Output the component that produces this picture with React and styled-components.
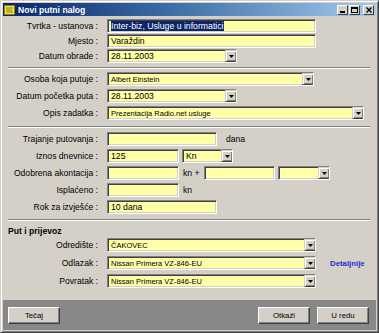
import React from 'react';
import styled, { createGlobalStyle } from 'styled-components';

const GlobalStyle = createGlobalStyle`
  html, body {
    margin: 0;
    padding: 0;
    background: #d4d0c8;
  }
  * { box-sizing: border-box; }
`;

const Window = styled.div`
  width: 379px;
  height: 333px;
  display: flex;
  flex-direction: column;
  background: #d4d0c8;
  border: 1px solid;
  border-color: #d4d0c8 #404040 #404040 #d4d0c8;
  box-shadow: inset 1px 1px #ffffff, inset -1px -1px #808080;
  padding: 2px;
  font-family: 'Liberation Sans', Arial, sans-serif;
  color: #000;
`;

const TitleBar = styled.div`
  height: 13px;
  flex-shrink: 0;
  display: flex;
  align-items: center;
  padding: 0 2px 0 1px;
  background: linear-gradient(to right, #0a246a 0%, #3a6ea5 45%, #a6caf0 100%);
`;

const TitleText = styled.span`
  color: #fff;
  font-weight: bold;
  font-size: 8.6px;
  margin-left: 3px;
  flex: 1;
`;

const CaptionGroup = styled.div`
  display: flex;
  gap: 1px;
`;

const CaptionButton = styled.div`
  width: 11px;
  height: 10px;
  margin-left: ${p => (p.$gap ? '2px' : '0')};
  background: #d4d0c8;
  border: 1px solid;
  border-color: #ffffff #404040 #404040 #ffffff;
  display: flex;
  align-items: center;
  justify-content: center;
`;

const Content = styled.div`
  flex: 1;
  padding: 3px 0 0 1px;
  display: flex;
  flex-direction: column;
`;

const Rows = styled.div`
  display: flex;
  flex-direction: column;
  gap: ${p => p.$gap}px;
`;

const Row = styled.div`
  display: flex;
  align-items: center;
  height: 14px;
`;

const Label = styled.div`
  width: 94px;
  flex-shrink: 0;
  text-align: right;
  font-size: 8.6px;
  white-space: nowrap;
  margin-right: 9px;
`;

const Field = styled.div`
  width: ${p => p.$w}px;
  height: 14px;
  flex-shrink: 0;
  display: flex;
  align-items: center;
  background: #ffffa8;
  border: 1px solid;
  border-color: #808080 #ffffff #ffffff #808080;
  box-shadow: inset 1px 1px #404040, inset -1px -1px #d4d0c8;
  padding: 0 2px 0 3px;
  font-size: ${p => (p.$small ? '7.5px' : '8.7px')};
  white-space: nowrap;
  overflow: hidden;
  margin-left: ${p => p.$ml || 0}px;
`;

const ComboText = styled.span`
  flex: 1;
  overflow: hidden;
`;

const Selected = styled.span`
  background: #0a246a;
  color: #fff;
`;

const DropButton = styled.div`
  width: 12px;
  height: 12px;
  margin-right: -1px;
  flex-shrink: 0;
  background: #d4d0c8;
  border: 1px solid;
  border-color: #d4d0c8 #404040 #404040 #d4d0c8;
  box-shadow: inset 1px 1px #fff, inset -1px -1px #808080;
  display: flex;
  align-items: center;
  justify-content: center;
`;

const Unit = styled.span`
  font-size: 8.6px;
  margin-left: ${p => p.$ml}px;
  white-space: nowrap;
`;

const Separator = styled.div`
  margin: ${p => p.$mt}px 6px ${p => p.$mb}px 4px;
  height: 2px;
  border-top: 1px solid #808080;
  border-bottom: 1px solid #ffffff;
`;

const SectionTitle = styled.div`
  font-size: 8.6px;
  font-weight: bold;
  height: 12px;
  line-height: 12px;
  margin: 4px 0 1px 4px;
`;

const LinkText = styled.span`
  color: #2a2ad0;
  font-weight: bold;
  font-size: 7.8px;
  margin-left: 14px;
`;

const Footer = styled.div`
  height: 30px;
  flex-shrink: 0;
  background: #888888;
  display: flex;
  align-items: center;
  padding: 0 7px 0 5px;
  gap: 7px;
`;

const Spacer = styled.div`
  flex: 1;
`;

const PushButton = styled.div`
  width: 52px;
  height: 17px;
  background: #d4d0c8;
  border: 1px solid;
  border-color: #ffffff #404040 #404040 #ffffff;
  box-shadow: inset -1px -1px #808080;
  display: flex;
  align-items: center;
  justify-content: center;
  font-size: 7.8px;
`;

const Arrow = () => (
  <svg width="5" height="3" viewBox="0 0 5 3">
    <path d="M0 0h5L2.5 3z" fill="#000" />
  </svg>
);

const Combo = ({ w, small, children, ml }) => (
  <Field $w={w} $small={small} $ml={ml} style={{ paddingRight: 0 }}>
    <ComboText>{children}</ComboText>
    <DropButton>
      <Arrow />
    </DropButton>
  </Field>
);

const AppIcon = () => (
  <svg width="11" height="10" viewBox="0 0 11 10">
    <rect x="0.5" y="0.5" width="10" height="9" fill="#f8e840" stroke="#8a7a10" />
    <path d="M2 3h7M2 5h6M2 7h7" stroke="#6b5e10" strokeWidth="0.8" />
  </svg>
);

export default function App() {
  return (
    <>
      <GlobalStyle />
      <Window>
        <TitleBar>
          <AppIcon />
          <TitleText>Novi putni nalog</TitleText>
          <CaptionGroup>
            <CaptionButton>
              <svg width="5" height="6" viewBox="0 0 5 6"><rect x="0" y="4" width="5" height="2" fill="#000" /></svg>
            </CaptionButton>
            <CaptionButton>
              <svg width="7" height="6" viewBox="0 0 7 6"><rect x="0.5" y="0.5" width="6" height="5" fill="none" stroke="#000" /><rect x="0" y="0" width="7" height="2" fill="#000" /></svg>
            </CaptionButton>
            <CaptionButton $gap>
              <svg width="6" height="6" viewBox="0 0 6 6"><path d="M0.5 0.5l5 5M5.5 0.5l-5 5" stroke="#000" strokeWidth="1.3" /></svg>
            </CaptionButton>
          </CaptionGroup>
        </TitleBar>

        <Content>
          <Rows $gap={1}>
            <Row>
              <Label>Tvrtka - ustanova :</Label>
              <Field $w={209}><Selected>Inter-biz, Usluge u informatici</Selected></Field>
            </Row>
            <Row>
              <Label>Mjesto :</Label>
              <Field $w={209}>Varaždin</Field>
            </Row>
            <Row>
              <Label>Datum obrade :</Label>
              <Combo w={130}>28.11.2003</Combo>
            </Row>
          </Rows>

          <Separator $mt={4} $mb={3} />

          <Rows $gap={3}>
            <Row>
              <Label>Osoba koja putuje :</Label>
              <Combo w={207} small>Albert Einstein</Combo>
            </Row>
            <Row>
              <Label>Datum početka puta :</Label>
              <Combo w={130}>28.11.2003</Combo>
            </Row>
            <Row>
              <Label>Opis zadatka :</Label>
              <Combo w={257} small>Prezentacija Radio.net usluge</Combo>
            </Row>
          </Rows>

          <Separator $mt={6} $mb={4} />

          <Rows $gap={3}>
            <Row>
              <Label>Trajanje putovanja :</Label>
              <Field $w={110} />
              <Unit $ml={9}>dana</Unit>
            </Row>
            <Row>
              <Label>Iznos dnevnice :</Label>
              <Field $w={72}>125</Field>
              <Combo w={51} ml={3}>Kn</Combo>
            </Row>
            <Row>
              <Label>Odobrena akontacija :</Label>
              <Field $w={72} />
              <Unit $ml={4}>kn +</Unit>
              <Field $w={71} $ml={5} />
              <Combo w={52} ml={3} />
            </Row>
            <Row>
              <Label>Isplaćeno :</Label>
              <Field $w={72} />
              <Unit $ml={4}>kn</Unit>
            </Row>
            <Row>
              <Label>Rok za izvješće :</Label>
              <Field $w={110}>10 dana</Field>
            </Row>
          </Rows>

          <Separator $mt={5} $mb={0} />

          <SectionTitle>Put i prijevoz</SectionTitle>
          <Rows $gap={4}>
            <Row>
              <Label>Odredište :</Label>
              <Combo w={209} small>ČAKOVEC</Combo>
            </Row>
            <Row>
              <Label>Odlazak :</Label>
              <Combo w={209} small>Nissan Primera VZ-846-EU</Combo>
              <LinkText>Detaljnije</LinkText>
            </Row>
            <Row>
              <Label>Povratak :</Label>
              <Combo w={209} small>Nissan Primera VZ-846-EU</Combo>
            </Row>
          </Rows>
        </Content>

        <Footer>
          <PushButton>Tečaj</PushButton>
          <Spacer />
          <PushButton>Otkaži</PushButton>
          <PushButton>U redu</PushButton>
        </Footer>
      </Window>
    </>
  );
}
